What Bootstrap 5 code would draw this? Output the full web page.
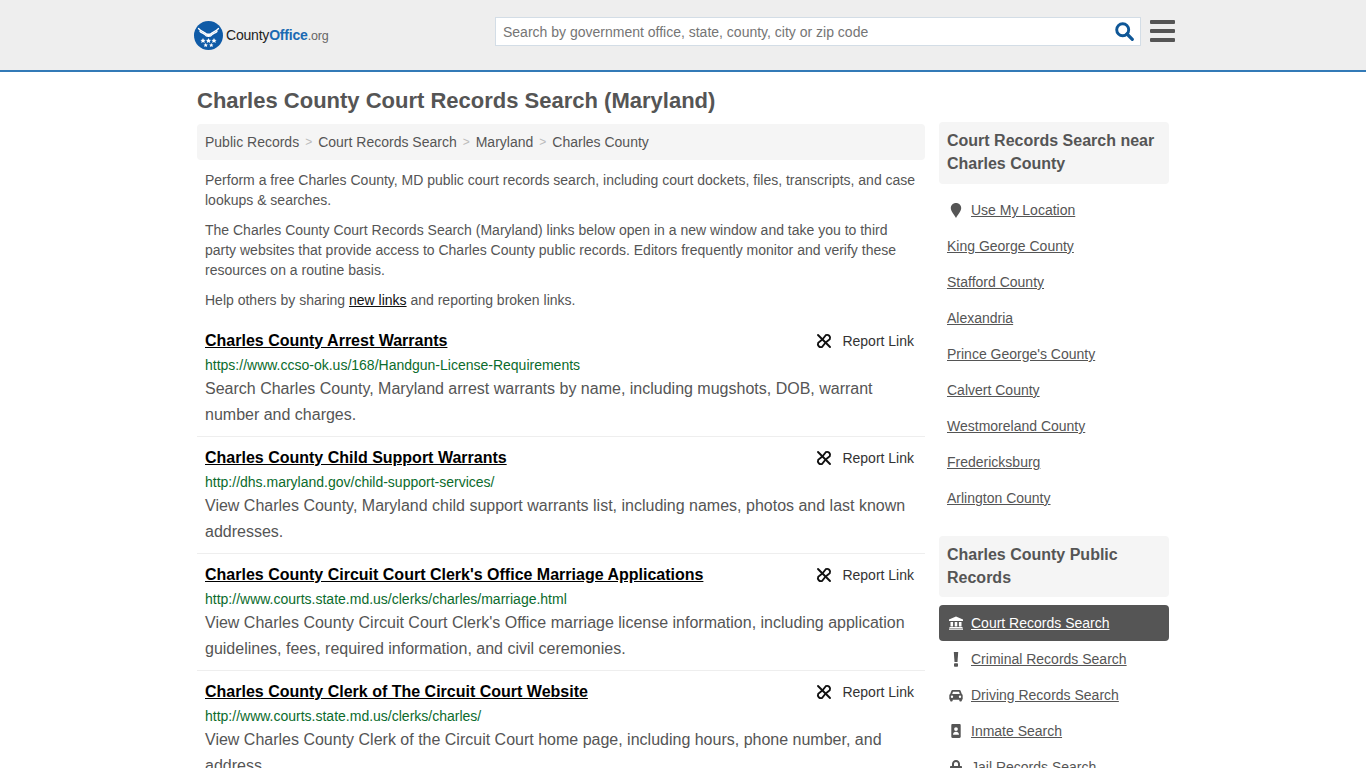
<!DOCTYPE html>
<html lang="en">

<head>
    <meta charset="UTF-8">
    <meta name="viewport" content="width=device-width, initial-scale=1.0">
    <title>Charles County Court Records Search (Maryland)</title>
    <link href="https://cdn.jsdelivr.net/npm/bootstrap@5.3.0/dist/css/bootstrap.min.css" rel="stylesheet">
    <style>
        html, body {
            height: 768px;
            overflow: hidden;
        }

        body {
            font-family: "Liberation Sans", Arial, sans-serif;
            font-size: 14px;
            line-height: 20px;
            color: #555;
            background: #fff;
        }

        .site-head {
            height: 72px;
            background: #eee;
            border-bottom: 2px solid #337ab7;
        }

        .site-wrap {
            width: 972px;
            margin: 0 auto;
        }

        .head-inner {
            width: 981px;
            margin-left: 194px;
            height: 70px;
        }

        .logo-box {
            width: 301px;
            padding-top: 1px;
        }

        .logo-text {
            font-size: 14px;
            color: #222;
            letter-spacing: -.2px;
            margin-left: 3px;
        }

        .logo-text b {
            color: #1b6ab3;
            font-weight: 700;
        }

        .logo-text span {
            color: #666;
            font-size: 12.5px;
        }

        .search-box {
            width: 646px;
            height: 29px;
            margin-top: -7px;
            background: #fff;
            border: 1px solid #d3dde6;
        }

        .search-box .form-control {
            height: 27px;
            border: 0;
            border-radius: 0;
            padding: 0 7px;
            font-size: 14px;
            color: #555;
            box-shadow: none;
            background: transparent;
        }

        .search-box .form-control::placeholder {
            color: #757575;
            opacity: 1;
        }

        .search-btn {
            border: 0;
            background: none;
            padding: 0 6px 0 0;
            line-height: 0;
        }

        .burger {
            width: 25px;
            margin-left: 9px;
            margin-top: -8px;
            gap: 5px;
            border: 0;
            background: none;
            padding: 0;
        }

        .burger i {
            display: block;
            height: 4px;
            background: #555;
            border-radius: 1px;
        }

        .page-title {
            font-size: 22px;
            line-height: 26px;
            font-weight: 700;
            color: #555;
            margin: 16px 0 10px;
        }

        .main-col {
            width: 728px;
        }

        .side-col {
            width: 230px;
            margin-top: -2px;
        }

        .crumbs {
            --bs-breadcrumb-divider: ">";
            --bs-breadcrumb-margin-bottom: 0;
            --bs-breadcrumb-item-padding-x: 6px;
            --bs-breadcrumb-divider-color: #bbb;
            background: #f5f5f5;
            border-radius: 4px;
            height: 36px;
            padding: 8px;
            margin-bottom: 10px;
        }

        .crumbs .breadcrumb-item + .breadcrumb-item::before {
            font-size: 12px;
        }

        .crumbs a {
            color: #555;
            text-decoration: none;
        }

        .intro {
            padding: 0 8px;
        }

        .intro p {
            margin: 0 0 10px;
        }

        .intro a {
            color: #111;
        }

        .rec-item {
            height: 117px;
            padding: 10px 8px 0;
            border-bottom: 1px solid #eee;
        }

        .rec-title {
            font-size: 16px;
            line-height: 22px;
            font-weight: 700;
            color: #000;
        }

        .rec-report {
            color: #333;
            text-decoration: none;
            padding-right: 3px;
        }

        .rec-report svg {
            margin-right: 10px;
        }

        .rec-url {
            color: #0b6b2c;
            line-height: 20px;
            margin-top: 3px;
        }

        .rec-desc {
            font-size: 16px;
            line-height: 26px;
            margin: 1px 0 0;
        }

        .side-head {
            background: #f5f5f5;
            border-radius: 4px;
            font-size: 16px;
            line-height: 23px;
            font-weight: 700;
            padding: 7px 8px 9px;
            color: #555;
            margin: 0 0 8px;
        }

        .side-head-tight {
            padding-bottom: 8px;
        }

        .side-list {
            margin-bottom: 20px;
        }

        .side-list .list-group-item {
            background: none;
            border: 0;
            padding: 8px;
            height: 36px;
            color: #555;
            border-radius: 4px;
        }

        .side-list a {
            color: #555;
        }

        .side-list .list-group-item.active {
            background: #555;
            color: #fff;
        }

        .side-list .active a {
            color: #fff;
        }

        .side-ico {
            width: 24px;
            flex: none;
            padding-left: 1px;
            line-height: 0;
        }
    </style>
</head>

<body>
    <!-- Header -->
    <header class="site-head">
        <div class="head-inner d-flex align-items-center">
            <div class="logo-box d-flex align-items-center">
                <svg width="29" height="29" viewBox="0 0 29 29">
                    <circle cx="14.5" cy="14.5" r="14.5" fill="#0f5ba7"/>
                    <g fill="none" stroke="#fff" stroke-width="1.300" stroke-linecap="round">
                        <path d="M4.500 7.500C7 10.500 10 10.500 13 13.500"/>
                        <path d="M6 10.500C8 12.500 10 12 12.500 15"/>
                        <path d="M24.500 7.500C22 10.500 19 10.500 16 13.500"/>
                        <path d="M23 10.500C21 12.500 19 12 16.500 15"/>
                    </g>
                    <path d="M12.500 12.500h4l-.8 3.500h-2.400z" fill="#fff"/>
                    <g fill="#fff">
                        <path d="M9 17 l.8 1.700 1.800.2-1.300 1.200.4 1.800-1.700-.9-1.700.9.4-1.800-1.300-1.200 1.800-.2z"/>
                        <path d="M14.500 17 l.8 1.700 1.800.2-1.300 1.200.4 1.800-1.700-.9-1.700.9.4-1.800-1.300-1.200 1.800-.2z"/>
                        <path d="M20 17 l.8 1.700 1.800.2-1.300 1.200.4 1.800-1.700-.9-1.700.9.4-1.800-1.300-1.200 1.800-.2z"/>
                        <path d="M11.700 22 l.7 1.400 1.500.2-1.100 1 .3 1.500-1.400-.8-1.400.8.3-1.500-1.100-1 1.500-.2z"/>
                        <path d="M17.300 22 l.7 1.400 1.500.2-1.100 1 .3 1.500-1.400-.8-1.400.8.3-1.500-1.100-1 1.500-.2z"/>
                    </g>
                </svg>
                <div class="logo-text">County<b>Office</b><span>.org</span></div>
            </div>
            <form class="search-box d-flex align-items-center">
                <input class="form-control" type="text" placeholder="Search by government office, state, county, city or zip code">
                <button class="search-btn" type="button" aria-label="Search">
                    <svg width="19" height="19" viewBox="0 0 19 19">
                        <circle cx="7.700" cy="7.700" r="6" fill="none" stroke="#0f5797" stroke-width="2.900"/>
                        <path d="M12 12 L17.300 17.300" stroke="#0f5797" stroke-width="3.200" stroke-linecap="round"/>
                    </svg>
                </button>
            </form>
            <button class="burger d-flex flex-column" type="button" aria-label="Menu"><i></i><i></i><i></i></button>
        </div>
    </header>

    <div class="site-wrap">
        <h1 class="page-title">Charles County Court Records Search (Maryland)</h1>

        <div class="d-flex justify-content-between">
            <!-- Main column -->
            <main class="main-col">
                <nav aria-label="breadcrumb">
                    <ol class="breadcrumb crumbs">
                        <li class="breadcrumb-item"><a href="#">Public Records</a></li>
                        <li class="breadcrumb-item"><a href="#">Court Records Search</a></li>
                        <li class="breadcrumb-item"><a href="#">Maryland</a></li>
                        <li class="breadcrumb-item"><a href="#">Charles County</a></li>
                    </ol>
                </nav>

                <div class="intro">
                    <p>Perform a free Charles County, MD public court records search, including court dockets, files, transcripts, and case lookups &amp; searches.</p>
                    <p>The Charles County Court Records Search (Maryland) links below open in a new window and take you to third party websites that provide access to Charles County public records. Editors frequently monitor and verify these resources on a routine basis.</p>
                    <p>Help others by sharing <a href="#">new links</a> and reporting broken links.</p>
                </div>

                <div>
                    <div class="rec-item">
                        <div class="d-flex justify-content-between align-items-center">
                            <a class="rec-title" href="#">Charles County Arrest Warrants</a>
                            <a class="rec-report d-flex align-items-center" href="#">
                                <svg width="16" height="16" viewBox="0 0 16 16"><use href="#ico-unlink"/></svg>Report Link</a>
                        </div>
                        <div class="rec-url">https://www.ccso-ok.us/168/Handgun-License-Requirements</div>
                        <p class="rec-desc">Search Charles County, Maryland arrest warrants by name, including mugshots, DOB, warrant number and charges.</p>
                    </div>
                    <div class="rec-item">
                        <div class="d-flex justify-content-between align-items-center">
                            <a class="rec-title" href="#">Charles County Child Support Warrants</a>
                            <a class="rec-report d-flex align-items-center" href="#">
                                <svg width="16" height="16" viewBox="0 0 16 16"><use href="#ico-unlink"/></svg>Report Link</a>
                        </div>
                        <div class="rec-url">http://dhs.maryland.gov/child-support-services/</div>
                        <p class="rec-desc">View Charles County, Maryland child support warrants list, including names, photos and last known addresses.</p>
                    </div>
                    <div class="rec-item">
                        <div class="d-flex justify-content-between align-items-center">
                            <a class="rec-title" href="#">Charles County Circuit Court Clerk's Office Marriage Applications</a>
                            <a class="rec-report d-flex align-items-center" href="#">
                                <svg width="16" height="16" viewBox="0 0 16 16"><use href="#ico-unlink"/></svg>Report Link</a>
                        </div>
                        <div class="rec-url">http://www.courts.state.md.us/clerks/charles/marriage.html</div>
                        <p class="rec-desc">View Charles County Circuit Court Clerk's Office marriage license information, including application guidelines, fees, required information, and civil ceremonies.</p>
                    </div>
                    <div class="rec-item">
                        <div class="d-flex justify-content-between align-items-center">
                            <a class="rec-title" href="#">Charles County Clerk of The Circuit Court Website</a>
                            <a class="rec-report d-flex align-items-center" href="#">
                                <svg width="16" height="16" viewBox="0 0 16 16"><use href="#ico-unlink"/></svg>Report Link</a>
                        </div>
                        <div class="rec-url">http://www.courts.state.md.us/clerks/charles/</div>
                        <p class="rec-desc">View Charles County Clerk of the Circuit Court home page, including hours, phone number, and address.</p>
                    </div>
                </div>
            </main>

            <!-- Sidebar -->
            <aside class="side-col">
                <h2 class="side-head">Court Records Search near Charles County</h2>
                <div class="list-group side-list">
                    <div class="list-group-item d-flex align-items-center">
                        <span class="side-ico"><svg width="16" height="15" viewBox="0 0 16 15"><path d="M8 0C5 0 2.800 2.200 2.800 5c0 3.500 3.500 6.500 5.200 10 1.700-3.500 5.200-6.500 5.200-10C13.200 2.200 11 0 8 0z" fill="#555"/></svg></span>
                        <a href="#">Use My Location</a>
                    </div>
                    <div class="list-group-item"><a href="#">King George County</a></div>
                    <div class="list-group-item"><a href="#">Stafford County</a></div>
                    <div class="list-group-item"><a href="#">Alexandria</a></div>
                    <div class="list-group-item"><a href="#">Prince George's County</a></div>
                    <div class="list-group-item"><a href="#">Calvert County</a></div>
                    <div class="list-group-item"><a href="#">Westmoreland County</a></div>
                    <div class="list-group-item"><a href="#">Fredericksburg</a></div>
                    <div class="list-group-item"><a href="#">Arlington County</a></div>
                </div>

                <h2 class="side-head side-head-tight">Charles County Public Records</h2>
                <div class="list-group side-list">
                    <div class="list-group-item active d-flex align-items-center">
                        <span class="side-ico"><svg width="16" height="14" viewBox="0 0 16 14" fill="#fff"><path d="M8 .5 L15 3.500 V5 H1 V3.500 Z"/><path d="M2.500 6h2.600v4.500H2.500zM6.700 6h2.600v4.500H6.700zM10.900 6h2.600v4.500h-2.600z"/><path d="M1.500 11h13v1.100h-13zM1 12.500h14V13.800H1z"/></svg></span>
                        <a href="#">Court Records Search</a>
                    </div>
                    <div class="list-group-item d-flex align-items-center">
                        <span class="side-ico"><svg width="16" height="15" viewBox="0 0 16 15" fill="#555"><path d="M5.800 0h4.400l-.7 10H6.500z"/><rect x="6" y="11.300" width="4" height="3.500" rx=".8"/></svg></span>
                        <a href="#">Criminal Records Search</a>
                    </div>
                    <div class="list-group-item d-flex align-items-center">
                        <span class="side-ico"><svg width="16" height="13" viewBox="0 0 16 13" fill="#555"><path fill-rule="evenodd" d="M4.500 1h7c.5 0 .9.300 1.100.7L13.800 5c.5.300.9.800.9 1.400V10c0 .4-.3.800-.8.800v.7c0 .5-.4.900-.9.900h-.8c-.5 0-.9-.4-.9-.9v-.7H4.700v.7c0 .5-.4.900-.9.900H3c-.5 0-.9-.4-.9-.9v-.7c-.5 0-.8-.4-.8-.8V6.400c0-.6.4-1.100.9-1.400l1.200-3.300c.2-.4.600-.7 1.100-.7zM5 2.800 4.200 4.900h7.600L11 2.800zM4 6.500a1.200 1.200 0 1 0 0 2.400 1.200 1.200 0 0 0 0-2.400zm8 0a1.200 1.200 0 1 0 0 2.400 1.200 1.200 0 0 0 0-2.400z"/></svg></span>
                        <a href="#">Driving Records Search</a>
                    </div>
                    <div class="list-group-item d-flex align-items-center">
                        <span class="side-ico"><svg width="16" height="14" viewBox="0 0 16 14" fill="#555"><path fill-rule="evenodd" d="M4.500 0h7c.7 0 1.200.5 1.200 1.200v11.600c0 .7-.5 1.200-1.200 1.200h-7c-.7 0-1.200-.5-1.200-1.200V1.200C3.300.5 3.800 0 4.500 0zM8 3.200a1.900 1.900 0 1 0 0 3.800 1.900 1.900 0 0 0 0-3.800zM5 10.800h6c0-1.800-1.300-3-3-3s-3 1.200-3 3z"/></svg></span>
                        <a href="#">Inmate Search</a>
                    </div>
                    <div class="list-group-item d-flex align-items-center">
                        <span class="side-ico"><svg width="16" height="15" viewBox="0 0 16 15" fill="#555"><path fill-rule="evenodd" d="M8 0C5.600 0 4 1.700 4 4v2H3c-.6 0-1 .4-1 1v7c0 .6.4 1 1 1h10c.6 0 1-.4 1-1V7c0-.6-.4-1-1-1h-1V4c0-2.300-1.600-4-4-4zm0 2c1.200 0 2 .8 2 2v2H6V4c0-1.200.8-2 2-2z"/></svg></span>
                        <a href="#">Jail Records Search</a>
                    </div>
                </div>
            </aside>
        </div>
    </div>

    <!-- Shared icon -->
    <svg width="0" height="0" class="d-none">
        <symbol id="ico-unlink" viewBox="0 0 16 16">
            <path d="M2 2 L14 14" fill="none" stroke="#111" stroke-width="1.900" stroke-linecap="round"/>
            <path d="M6.800 6 L9.800 2.200 A3 3 0 0 1 13.800 6.200 L10 9.200 M9.200 10 L6.200 13.800 A3 3 0 0 1 2.200 9.800 L6 6.800" fill="none" stroke="#111" stroke-width="1.900" stroke-linecap="round"/>
        </symbol>
    </svg>

    <script src="https://cdn.jsdelivr.net/npm/bootstrap@5.3.0/dist/js/bootstrap.bundle.min.js"></script>
</body>

</html>
